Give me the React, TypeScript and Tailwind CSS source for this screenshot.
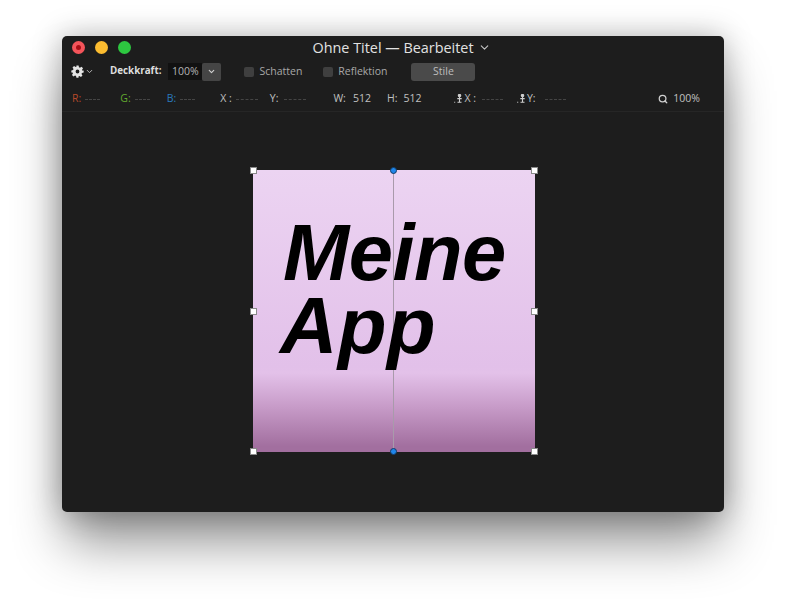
import React from "react";
import { ChevronDown, Search } from "lucide-react";

const Gear = () => (
  <svg width="13" height="13" viewBox="0 0 24 24" fill="#e4e4e4">
    <path fillRule="evenodd" d="M10 1h4l.7 3.2 1.9.8 2.8-1.8 2.8 2.8-1.8 2.8.8 1.9L23.4 10v4l-3.2.7-.8 1.9 1.8 2.8-2.8 2.8-2.8-1.8-1.9.8L14 23.4h-4l-.7-3.2-1.9-.8-2.8 1.8-2.8-2.8 1.8-2.8-.8-1.9L.6 14V10l3.2-.7.8-1.9L2.8 4.6 5.6 1.8l2.8 1.8 1.9-.8L10 1zm2 7.5a3.5 3.5 0 1 0 0 7 3.5 3.5 0 0 0 0-7z" />
  </svg>
);

const Pin = () => (
  <svg width="9" height="9" viewBox="0 0 9 9" fill="none" stroke="#cfcfcf" strokeWidth="1.1">
    <circle cx="5.5" cy="1.6" r="1.2" fill="#cfcfcf" />
    <path d="M5.5 2.5v5.5M3.3 4.6h4.4M3.5 8.2h4" />
    <path d="M0.2 8.2h1" />
  </svg>
);

const Dashes = ({ w }: { w: string }) => (
  <span className={`${w} border-t border-dashed border-[#454545] h-0 translate-y-[1px]`} />
);

const Handle = ({ className }: { className: string }) => (
  <span className={`absolute w-[7px] h-[7px] bg-white border border-[#8a8a8a] ${className}`} />
);

const Dot = ({ className }: { className: string }) => (
  <span className={`absolute w-[7px] h-[7px] rounded-full bg-[#1f86ea] border border-[#123c66] left-[137px] ${className}`} />
);

export default function App() {
  return (
    <div className="w-[786px] h-[600px] bg-white overflow-hidden pt-[36px] pl-[62px] font-['Liberation_Sans',Arial,sans-serif]">
      <div className="w-[662px] h-[476px] rounded-[5px] bg-[#1d1d1d] flex flex-col shadow-[0_34px_52px_-4px_rgba(0,0,0,0.43),0_0_30px_rgba(0,0,0,0.28)]">
        {/* Title bar */}
        <div className="relative h-[23px] mt-[1px] shrink-0 flex items-center justify-center">
          <div className="absolute left-[10px] top-[4px] flex gap-[10px]">
            <span className="w-[13px] h-[13px] rounded-full bg-[#f4545a] flex items-center justify-center">
              <span className="w-[5px] h-[5px] rounded-full bg-[#a80d14]" />
            </span>
            <span className="w-[13px] h-[13px] rounded-full bg-[#fbbc30]" />
            <span className="w-[13px] h-[13px] rounded-full bg-[#2dc840]" />
          </div>
          <div className="relative text-[14.4px] text-[#e2e2e2] font-['Open_Sans','Liberation_Sans',sans-serif] leading-none">
            <span>Ohne Titel — Bearbeitet</span>
            <ChevronDown size={13} strokeWidth={2} className="absolute -right-[17px] top-[0px] text-[#c4c4c4]" />
          </div>
        </div>

        {/* Toolbar */}
        <div className="h-[23px] shrink-0 flex items-center pl-[9px] text-[10.5px] text-[#a8a8a8] font-['Open_Sans','Liberation_Sans',sans-serif]">
          <Gear />
          <ChevronDown size={9} strokeWidth={2.5} className="ml-[1px] text-[#bdbdbd]" />
          <span className="ml-[16px] font-bold text-[#dedede] text-[9.8px]">Deckkraft:</span>
          <span className="ml-[7px] w-[34px] h-[17px] bg-[#111111] flex items-center justify-center text-[#b4b4b4]">100%</span>
          <span className="w-[19px] h-[18px] rounded-[2px] bg-[#454545] flex items-center justify-center">
            <ChevronDown size={9} strokeWidth={3} className="text-[#d0d0d0]" />
          </span>
          <span className="ml-[23px] w-[10px] h-[10px] rounded-[2px] bg-[#3f3f3f]" />
          <span className="ml-[5px]">Schatten</span>
          <span className="ml-[21px] w-[10px] h-[10px] rounded-[2px] bg-[#3f3f3f]" />
          <span className="ml-[5px]">Reflektion</span>
          <span className="ml-[24px] w-[64px] h-[18px] rounded-[3px] bg-[#4a4a4a] flex items-center justify-center text-[#bdbdbd]">Stile</span>
        </div>

        {/* Info bar */}
        <div className="h-[26px] mt-[3px] shrink-0 flex items-center border-b border-[#262626] pl-[10px] pr-[24px] text-[10.5px] text-[#c0c0c0] font-['Open_Sans','Liberation_Sans',sans-serif]">
          <span className="text-[#b6492a]">R:</span>
          <span className="ml-[4px] flex"><Dashes w="w-[15px]" /></span>
          <span className="ml-[20px] text-[#62a92f]">G:</span>
          <span className="ml-[4px] flex"><Dashes w="w-[15px]" /></span>
          <span className="ml-[17px] text-[#2a79bb]">B:</span>
          <span className="ml-[4px] flex"><Dashes w="w-[15px]" /></span>
          <span className="ml-[25px]">X :</span>
          <span className="ml-[4px] flex"><Dashes w="w-[22px]" /></span>
          <span className="ml-[12px]">Y:</span>
          <span className="ml-[6px] flex"><Dashes w="w-[22px]" /></span>
          <span className="ml-[27px]">W:</span>
          <span className="ml-[7px]">512</span>
          <span className="ml-[16px]">H:</span>
          <span className="ml-[6px]">512</span>
          <span className="ml-[33px] flex items-center gap-[1px]"><Pin />X :</span>
          <span className="ml-[6px] flex"><Dashes w="w-[21px]" /></span>
          <span className="ml-[14px] flex items-center gap-[1px]"><Pin />Y:</span>
          <span className="ml-[9px] flex"><Dashes w="w-[21px]" /></span>
          <span className="ml-auto flex items-center gap-[5px]">
            <Search size={10} strokeWidth={3} className="text-[#d0d0d0]" />
            100%
          </span>
        </div>

        {/* Canvas */}
        <div className="flex-1 pt-[58px] pl-[191px]">
          <div className="relative w-[282px] h-[282px] bg-[linear-gradient(to_bottom,#ecd4f2_0%,#e2c0e9_70%,#e3c1e9_72%,#c79bc8_84%,#a26f9f_98%)] pl-[30px] pt-[46px]">
            <div className="absolute left-[140px] top-0 bottom-0 w-px bg-[#a99aab]" />
            <div className="relative text-[79.5px] leading-[73px] font-bold italic text-black tracking-[-0.5px]">
              <div>Meine</div>
              <div className="-ml-[3px] tracking-[0.5px]">App</div>
            </div>
            <Handle className="-left-[3px] -top-[3px]" />
            <Handle className="-right-[3px] -top-[3px]" />
            <Handle className="-left-[3px] top-[138px]" />
            <Handle className="-right-[3px] top-[138px]" />
            <Handle className="-left-[3px] -bottom-[3px]" />
            <Handle className="-right-[3px] -bottom-[3px]" />
            <Dot className="-top-[3px]" />
            <Dot className="-bottom-[3px]" />
          </div>
        </div>
      </div>
    </div>
  );
}
